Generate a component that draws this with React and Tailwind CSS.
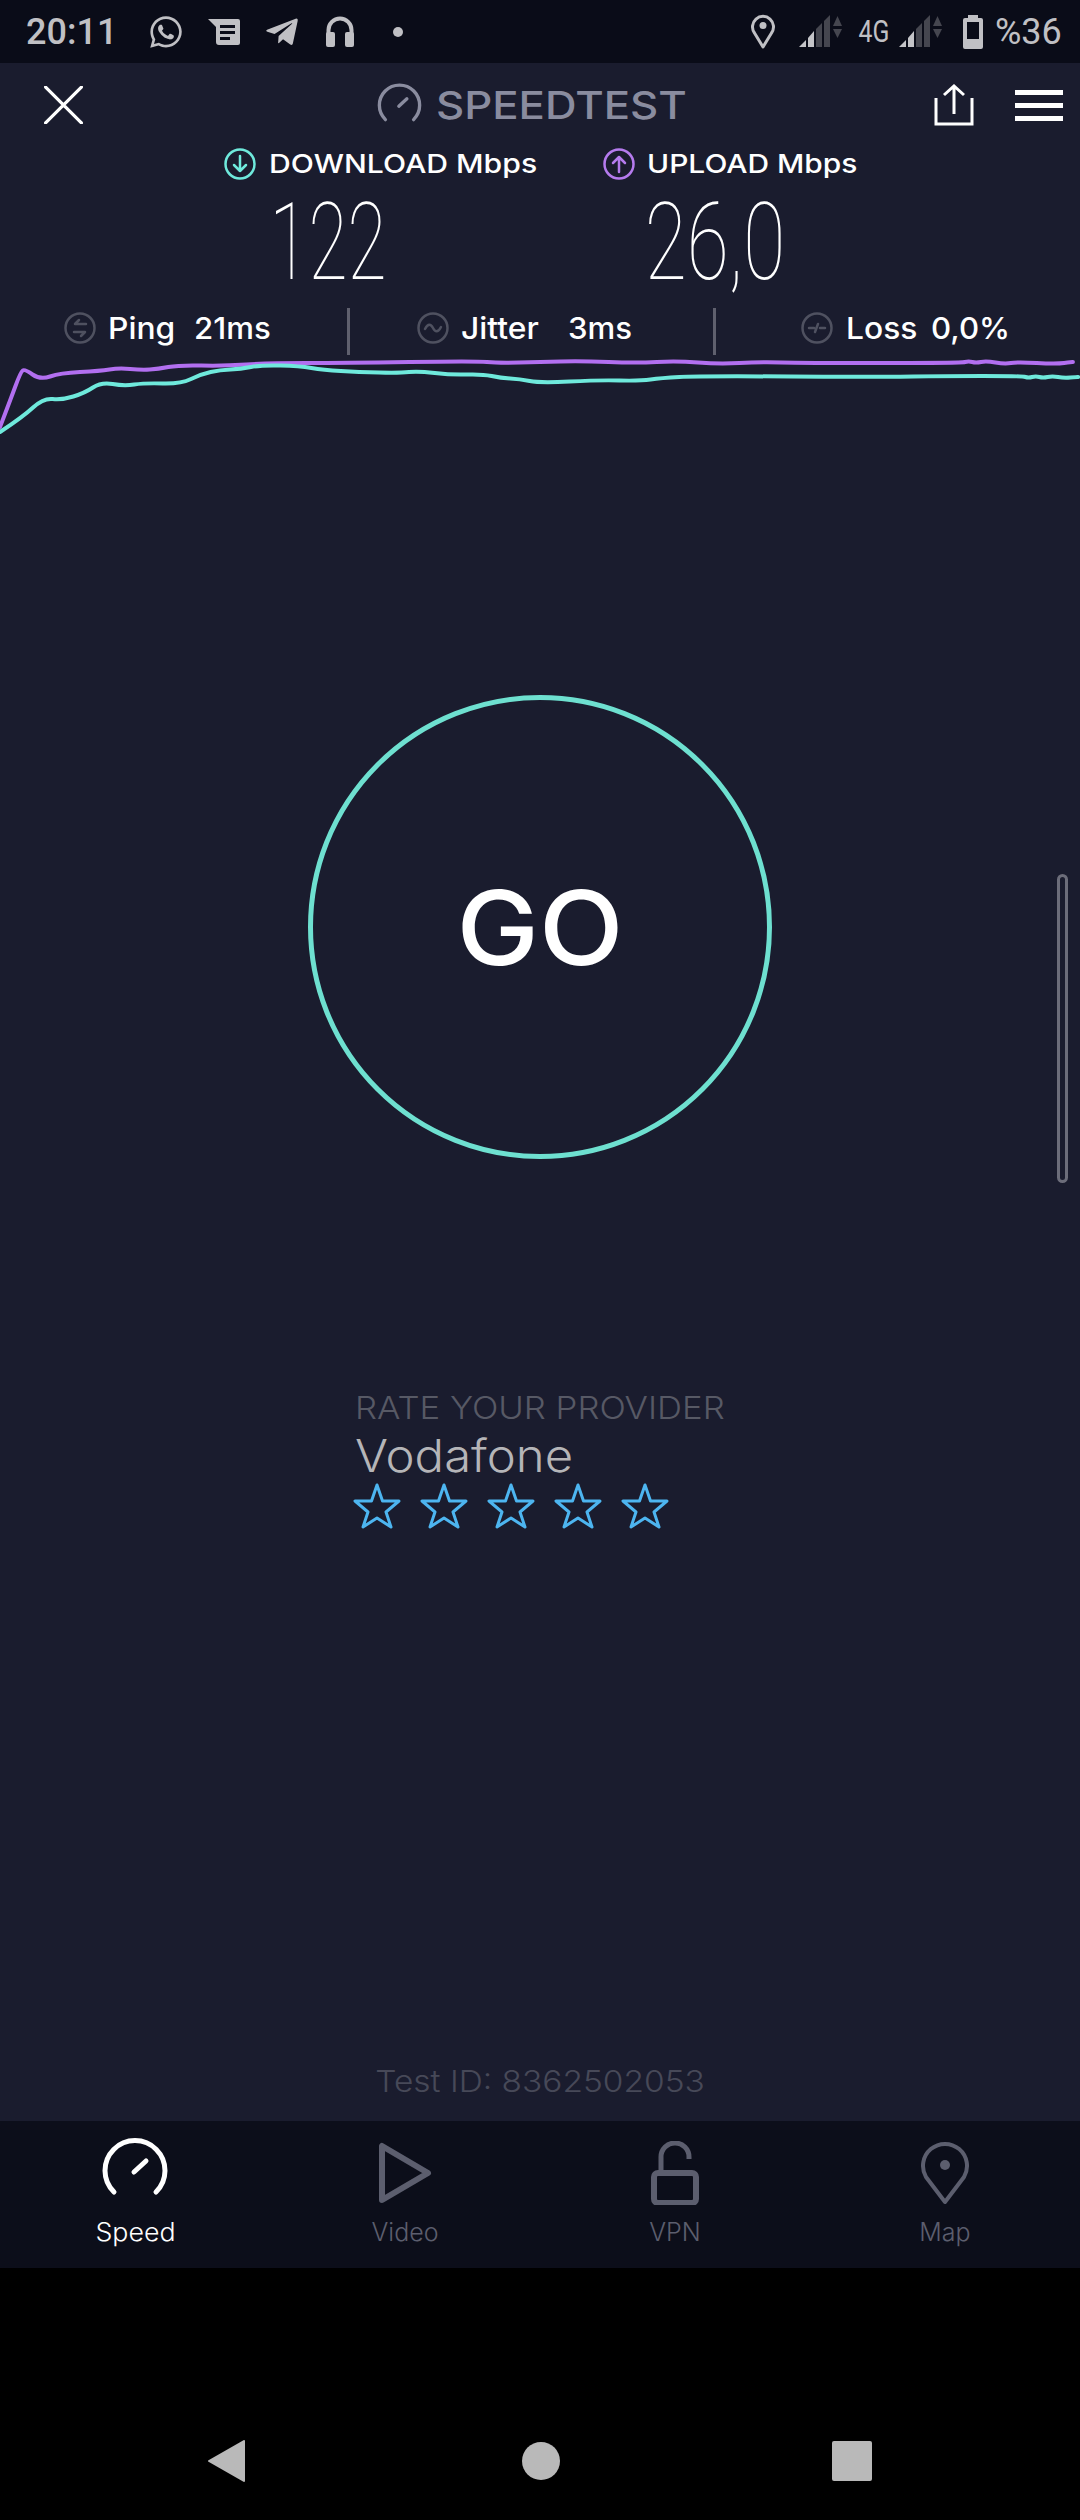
import { FaWhatsapp, FaTelegramPlane } from "react-icons/fa";

// traced from the reference, left half and right half of the chart
const stretchL = (p) => [p[0] * 1.0328, p[1]];
const stretchR = (p) => [540 + (p[0] - 540) * 1.0328, p[1]];
const purplePts = [
    ...[[0,427],[10,400],[20,372],[24,369],[39,380],[58,373],[97,371],[115,368],[137,370],[153,369],[173,365],[217,366],[260,363],[333,363],[460,361],[483,363]].map(stretchL),
    ...[[540,362],[580,361],[633,363],[673,361],[713,364],[753,362],[793,363],[948,363],[955,361],[962,363],[972,361],[990,364],[1002,362],[1040,364],[1055,362],[1056,362]].map(stretchR),
];
const cyanPts = [
    ...[[0,432],[22,417],[42,398],[60,400],[82,393],[98,382],[120,386],[140,383],[175,384],[195,374],[213,370],[233,369],[253,365],[290,366],[313,370],[347,372],[387,373],[405,371],[437,375],[467,374],[485,378],[503,379]].map(stretchL),
    ...[[540,383],[597,380],[637,381],[657,378],[693,376],[873,377],[930,376],[1007,376],[1013,378],[1020,376],[1027,378],[1036,376],[1047,378],[1060,377],[1061,377]].map(stretchR),
];

// smooth line through midpoints, y shifted into the chart's own box
function smooth(pts) {
    let d = `M${pts[0][0]} ${pts[0][1] - 355}`;
    for (let i = 1; i < pts.length - 1; i++) {
        const mx = (pts[i][0] + pts[i + 1][0]) / 2;
        const my = (pts[i][1] + pts[i + 1][1]) / 2 - 355;
        d += ` Q${pts[i][0]} ${pts[i][1] - 355} ${mx} ${my}`;
    }
    const last = pts[pts.length - 1];
    return d + ` L${last[0]} ${last[1] - 355}`;
}

function Gauge({ className, color, sw }) {
    return (
        <svg viewBox="0 0 70 64" className={className} fill="none" stroke={color} strokeWidth={sw} strokeLinecap="round">
            <path d="M14 56 A30 30 0 1 1 56 56" />
            <path d="M34 36 L46 25" />
        </svg>
    );
}

function Signal() {
    return (
        <svg viewBox="0 0 45 33" className="w-[45px] h-[33px] shrink-0">
            <polygon points="1,32 8,32 8,25" fill="#c4c4c8" />
            <polygon points="10,32 16,32 16,16 10,23" fill="#c4c4c8" />
            <polygon points="18,32 24,32 24,8 18,14" fill="#45464f" />
            <polygon points="26,32 32,32 32,0 26,6" fill="#45464f" />
            <polygon points="35,11 39.5,1 44,11" fill="#45464f" />
            <polygon points="35,14 44,14 39.5,23" fill="#45464f" />
        </svg>
    );
}

function StatusBar() {
    return (
        <div className="h-[63px] bg-[#0a0c18] flex items-center pl-[26px] font-[family-name:Roboto] text-[#c0c0c4]">
            <span className="w-[122px] text-[36px] leading-none font-medium">20:11</span>
            <FaWhatsapp className="w-[36px] h-[36px] shrink-0" />
            <svg viewBox="0 0 32 26" className="w-[32px] h-[26px] ml-[24px] shrink-0">
                <path d="M0 0 H30 a2 2 0 0 1 2 2 V24 a2 2 0 0 1 -2 2 H11 a3 3 0 0 1 -3 -3 V8 Z" fill="#c0c0c4" />
                <rect x="12" y="6" width="15" height="3" fill="#0a0c18" />
                <rect x="12" y="12" width="15" height="3" fill="#0a0c18" />
                <rect x="12" y="18" width="10" height="3" fill="#0a0c18" />
            </svg>
            <FaTelegramPlane className="w-[36px] h-[36px] ml-[24px] shrink-0" />
            <svg viewBox="0 0 28 31" className="w-[30px] h-[31px] ml-[25px] shrink-0" fill="#c0c0c4">
                <path d="M2.5 20 V14 a11.5 11.5 0 0 1 23 0 V20" fill="none" stroke="#c0c0c4" strokeWidth="4" />
                <rect x="0" y="16" width="9" height="15" rx="2" />
                <rect x="19" y="16" width="9" height="15" rx="2" />
            </svg>
            <div className="w-[10px] h-[10px] rounded-full bg-[#c0c0c4] ml-[38px] shrink-0" />

            <svg viewBox="0 0 24 36" className="w-[24px] h-[36px] ml-[348px] shrink-0" fill="none" stroke="#c0c0c4" strokeWidth="3">
                <path d="M12 33 L3.5 19 A10.5 10.5 0 1 1 20.5 19 Z" strokeLinejoin="round" />
                <circle cx="12" cy="11.5" r="3.5" fill="#c0c0c4" stroke="none" />
            </svg>
            <div className="ml-[23px]"><Signal /></div>
            <span className="w-[60px] ml-[1px] text-center text-[31px] leading-none scale-x-[0.8]">4G</span>
            <div className="-ml-[6px]"><Signal /></div>
            <svg viewBox="0 0 20 34" className="w-[20px] h-[34px] ml-[20px] shrink-0">
                <path d="M5 0 H15 V3 H18 a2 2 0 0 1 2 2 V32 a2 2 0 0 1 -2 2 H2 a2 2 0 0 1 -2 -2 V5 a2 2 0 0 1 2 -2 H5 Z" fill="#c0c0c4" />
                <rect x="4" y="7" width="12" height="17" fill="#0a0c18" />
            </svg>
            <span className="ml-[12px] text-[36px] leading-none">%36</span>
        </div>
    );
}

function Header() {
    return (
        <div className="h-[84px] flex items-center pl-[44px]">
            <svg viewBox="0 0 36 36" className="w-[39px] h-[38px] shrink-0" stroke="#fff" strokeWidth="3" strokeLinecap="round">
                <path d="M1 1 L35 35 M35 1 L1 35" />
            </svg>
            <Gauge className="w-[47px] h-[43px] ml-[293px] -mt-[4px] shrink-0" color="#8a8c9f" sw="5" />
            <span className="w-[248px] ml-[13px] origin-left scale-x-[1.15] font-[family-name:Inter] text-[38px] leading-none font-medium text-[#8a8c9f]">
                SPEEDTEST
            </span>
            <svg viewBox="0 0 40 42" className="w-[40px] h-[42px] ml-[250px] shrink-0" fill="none" stroke="#fff" strokeWidth="3">
                <path d="M2 14 V40 H38 V14" />
                <path d="M20 30 V3 M10 11 L20 2 L30 11" />
            </svg>
            <div className="flex flex-col gap-[8px] ml-[41px]">
                <div className="w-[48px] h-[5px] bg-white" />
                <div className="w-[48px] h-[5px] bg-white" />
                <div className="w-[48px] h-[5px] bg-white" />
            </div>
        </div>
    );
}

function RoundIcon({ color, children, sw = 2.5 }) {
    return (
        <svg viewBox="0 0 32 32" className="w-[32px] h-[32px] shrink-0" fill="none" stroke={color} strokeWidth={sw} strokeLinecap="round" strokeLinejoin="round">
            <circle cx="16" cy="16" r="14.5" />
            {children}
        </svg>
    );
}

function Results() {
    return (
        <div className="font-[family-name:Inter] text-white">
            <div className="h-[34px] flex items-center pl-[224px] text-[26px] leading-none font-medium">
                <RoundIcon color="#6fe9dc"><path d="M16 8 V23 M10 17 L16 23 L22 17" /></RoundIcon>
                <span className="ml-[13px] w-[334px] origin-left scale-x-[1.16]">DOWNLOAD Mbps</span>
                <RoundIcon color="#b57bee"><path d="M16 24 V9 M10 15 L16 9 L22 15" /></RoundIcon>
                <span className="ml-[12px] origin-left scale-x-[1.15]">UPLOAD Mbps</span>
            </div>
            <div className="h-[122px] flex items-center pl-[228px] font-[family-name:Roboto] text-[108px] leading-none font-thin">
                <span className="w-[200px] text-center scale-x-[0.66]">122</span>
                <span className="ml-[187px] w-[200px] text-center scale-x-[0.71]">26,0</span>
            </div>
            <div className="h-[50px] mb-[2px] flex items-center text-[30px] leading-none font-medium">
                <div className="w-[347px] flex items-center pl-[64px]">
                    <RoundIcon color="#4f5160">
                        <path d="M22 12 H11 L15 8 M10 20 H21 L17 24" />
                    </RoundIcon>
                    <span className="ml-[12px] w-[86px] origin-left scale-x-[1.06]">Ping</span>
                    <span className="origin-left scale-x-[1.04]">21ms</span>
                </div>
                <div className="w-[3px] h-[47px] mt-[7px] bg-[#5f606e]" />
                <div className="w-[363px] flex items-center pl-[67px]">
                    <RoundIcon color="#4f5160">
                        <path d="M8 17 C11 11 14 12 16 16 C18 20 21 21 24 15" />
                    </RoundIcon>
                    <span className="ml-[12px] w-[107px] origin-left scale-x-[1.06]">Jitter</span>
                    <span className="origin-left scale-x-[1.04]">3ms</span>
                </div>
                <div className="w-[3px] h-[47px] mt-[7px] bg-[#5f606e]" />
                <div className="flex items-center pl-[85px]">
                    <RoundIcon color="#4f5160">
                        <path d="M8 16 H13 M14 20 L17 12 M19 16 H24" />
                    </RoundIcon>
                    <span className="ml-[13px] w-[85px] origin-left scale-x-[1.06]">Loss</span>
                    <span className="origin-left scale-x-[1.04]">0,0%</span>
                </div>
            </div>
        </div>
    );
}

function Star() {
    return (
        <svg viewBox="0 0 48 46" className="w-[48px] h-[46px] shrink-0" fill="none" stroke="#4db5f0" strokeWidth="3" strokeLinejoin="round">
            <polygon points="24,2 29.5,18 46,18 33,29 38,44 24,35 10,44 15,29 2,18 18.5,18" />
        </svg>
    );
}

function TabLabel({ active, children }) {
    return (
        <span className={active ? "absolute top-[99px] text-[25px] leading-none text-white scale-x-[1.07]" : "absolute top-[99px] text-[25px] leading-none text-[#5c5e6e]"}>
            {children}
        </span>
    );
}

function TabBar() {
    return (
        <div className="h-[147px] bg-[#0c0e1a] grid grid-cols-4 font-[family-name:Inter] font-light">
            <div className="relative flex justify-center pt-[15px]">
                <Gauge className="w-[70px] h-[64px]" color="#fff" sw="5" />
                <TabLabel active>Speed</TabLabel>
            </div>
            <div className="relative flex justify-center pt-[21px]">
                <svg viewBox="0 0 56 62" className="w-[56px] h-[62px]" fill="none" stroke="#5c5e6e" strokeWidth="6" strokeLinejoin="round">
                    <path d="M5 4 V58 L51 31 Z" />
                </svg>
                <TabLabel>Video</TabLabel>
            </div>
            <div className="relative flex justify-center pt-[20px]">
                <svg viewBox="0 0 48 64" className="w-[48px] h-[64px]" fill="none" stroke="#5c5e6e">
                    <path d="M10 31 V16 A14 14 0 0 1 38 16 V18" strokeWidth="5" />
                    <rect x="3" y="32" width="42" height="30" rx="4" strokeWidth="6" />
                </svg>
                <TabLabel>VPN</TabLabel>
            </div>
            <div className="relative flex justify-center pt-[20px]">
                <svg viewBox="0 0 50 64" className="w-[50px] h-[64px]" fill="none" stroke="#5c5e6e" strokeWidth="4" strokeLinejoin="round">
                    <path d="M25 61 L6 36 A22 22 0 1 1 44 36 Z" />
                    <circle cx="25" cy="24" r="5" fill="#5c5e6e" stroke="none" />
                </svg>
                <TabLabel>Map</TabLabel>
            </div>
        </div>
    );
}

function NavBar() {
    return (
        <div className="h-[252px] bg-black flex items-start pt-[172px] pl-[208px]">
            <svg viewBox="0 0 37 42" className="w-[37px] h-[42px] shrink-0" fill="#b9b9b9" stroke="#b9b9b9" strokeWidth="2" strokeLinejoin="round">
                <polygon points="36,1 36,41 1,21" />
            </svg>
            <div className="w-[38px] h-[38px] rounded-full bg-[#b9b9b9] ml-[277px] mt-[2px] shrink-0" />
            <div className="w-[40px] h-[40px] rounded-[2px] bg-[#b9b9b9] ml-[272px] mt-[1px] shrink-0" />
        </div>
    );
}

export default function App() {
    return (
        <div className="relative w-[1080px] h-[2520px] overflow-hidden bg-[#1a1c2e]">
            <StatusBar />
            <Header />
            <Results />

            <svg viewBox="0 0 1080 90" className="block w-[1080px] h-[90px]" fill="none" strokeWidth="4" strokeLinecap="round" strokeLinejoin="round">
                <path d={smooth(purplePts)} stroke="#b26ff0" />
                <path d={smooth(cyanPts)} stroke="#6fe9dc" />
            </svg>

            <div className="w-[464px] h-[464px] mx-auto mt-[250px] rounded-full border-[5px] border-[#6ee0d0] flex items-center justify-center font-[family-name:Inter] font-[550] text-[103px] leading-none text-white">
                <span className="scale-x-[1.07]">GO</span>
            </div>

            <div className="pl-[355px] mt-[230px] font-[family-name:Inter] font-light">
                <div className="origin-left scale-x-[1.12] text-[31px] leading-[38px] text-[#575965]">RATE YOUR PROVIDER</div>
                <div className="origin-left scale-x-[1.09] text-[45px] leading-[52px] text-[#b5b5b8] mt-[3px]">Vodafone</div>
                <div className="flex gap-[19px] -ml-[2px] mt-[1px]">
                    <Star />
                    <Star />
                    <Star />
                    <Star />
                    <Star />
                </div>
            </div>

            <div className="mt-[533px] h-[38px] text-center scale-x-[1.115] font-[family-name:Inter] font-light text-[30px] leading-[38px] text-[#474958]">
                Test ID: 8362502053
            </div>

            {/* scroll indicator sits over the page */}
            <div className="absolute right-[12px] top-[874px] w-[11px] h-[309px] rounded-full border-[3px] border-[#6c6d7a]" />

            <div className="absolute bottom-0 left-0 w-full">
                <TabBar />
                <NavBar />
            </div>
        </div>
    );
}
